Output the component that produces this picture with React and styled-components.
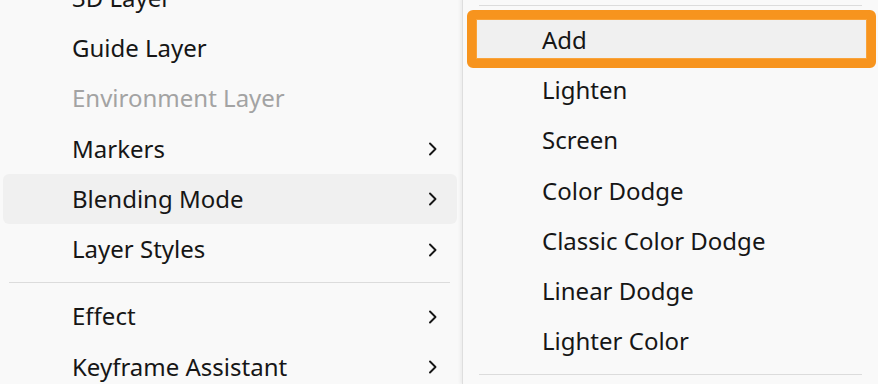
import React from "react";
import styled, { createGlobalStyle, css } from "styled-components";

const GlobalStyle = createGlobalStyle`
  html, body {
    margin: 0;
    padding: 0;
    background: #f9f9f9;
  }
  body {
    font-family: "Segoe UI", "Noto Sans", "Open Sans", sans-serif;
  }
`;

const Screen = styled.div`
  display: flex;
  width: 878px;
  height: 384px;
  overflow: hidden;
  background: #f9f9f9;
`;

const Menu = styled.div`
  display: flex;
  flex-direction: column;
  flex-shrink: 0;
  background: #f9f9f9;
`;

const MainMenu = styled(Menu)`
  width: 469px;
  margin-left: -7px;
  margin-top: -27px;
`;

const SubMenu = styled(Menu)`
  flex: 1;
  margin-top: -2px;
  border-left: 1px solid #dedede;
  box-shadow: -2px 0 3px rgba(0, 0, 0, 0.05);
  position: relative;
`;

const Item = styled.div`
  position: relative;
  display: flex;
  align-items: center;
  justify-content: space-between;
  height: 50.3px;
  flex-shrink: 0;
  border-radius: 6px;
  font-size: 24px;
  color: ${(p) => (p.$disabled ? "#a3a3a3" : "#161616")};
  background: ${(p) => (p.$active ? "#f0f0f0" : "transparent")};
  margin: ${(p) => (p.$sub ? "0 5px" : "0 5px 0 10px")};
  padding: ${(p) => (p.$sub ? "0 19px 0 74px" : "0 19px 0 69px")};

  ${(p) =>
    p.$marked &&
    css`
      &::after {
        content: "";
        position: absolute;
        top: -5px;
        bottom: -3px;
        left: -1px;
        right: -3px;
        border: 9px solid #f7941e;
        border-radius: 6px;
        box-shadow: inset 0 0 0 1px #f9a33a;
      }
    `}
`;

const Label = styled.span`
  white-space: nowrap;
  line-height: 1;
  margin-top: -1px;
`;

const Separator = styled.div`
  height: 1px;
  flex-shrink: 0;
  background: #dcdcdc;
  margin: 7px ${(p) => (p.$sub ? "16px" : "12px")} 9px 16px;
`;

const Chevron = () => (
  <svg width="11" height="16" viewBox="0 0 11 16" fill="none">
    <path
      d="M3 2.5 L8.5 8 L3 13.5"
      stroke="#161616"
      strokeWidth="1.9"
      strokeLinecap="round"
      strokeLinejoin="round"
    />
  </svg>
);

const mainItems = [
  { label: "3D Layer" },
  { label: "Guide Layer" },
  { label: "Environment Layer", disabled: true },
  { label: "Markers", sub: true },
  { label: "Blending Mode", sub: true, active: true },
  { label: "Layer Styles", sub: true },
  { sep: true },
  { label: "Effect", sub: true },
  { label: "Keyframe Assistant", sub: true },
];

const blendItems = [
  "Add",
  "Lighten",
  "Screen",
  "Color Dodge",
  "Classic Color Dodge",
  "Linear Dodge",
  "Lighter Color",
];

export default function App() {
  return (
    <>
      <GlobalStyle />
      <Screen>
        <MainMenu>
          {mainItems.map((it, i) =>
            it.sep ? (
              <Separator key={i} />
            ) : (
              <Item key={i} $disabled={it.disabled} $active={it.active}>
                <Label>{it.label}</Label>
                {it.sub && <Chevron />}
              </Item>
            )
          )}
        </MainMenu>
        <SubMenu>
          <Separator $sub />
          {blendItems.map((label, i) => (
            <Item key={label} $sub $active={i === 0} $marked={i === 0}>
              <Label>{label}</Label>
            </Item>
          ))}
          <Separator $sub />
        </SubMenu>
      </Screen>
    </>
  );
}
